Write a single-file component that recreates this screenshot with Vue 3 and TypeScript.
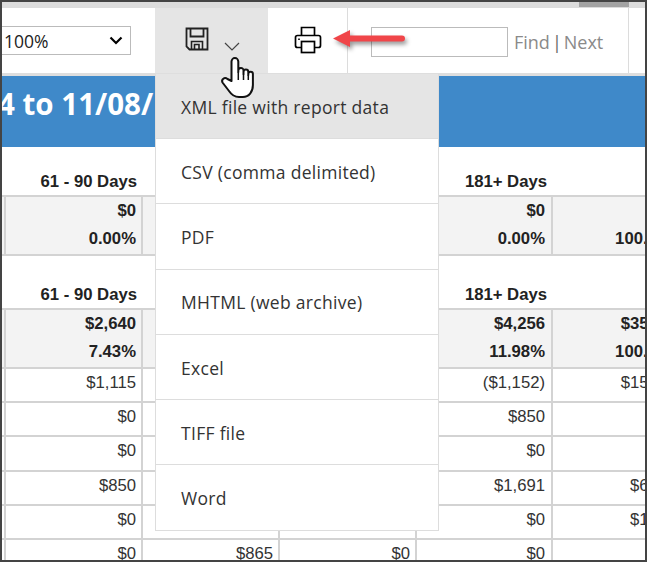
<script setup lang="ts">
interface ReportRow {
  cells: string[]
}

const menuItems: string[] = [
  'XML file with report data',
  'CSV (comma delimited)',
  'PDF',
  'MHTML (web archive)',
  'Excel',
  'TIFF file',
  'Word'
]

const headers: string[] = ['61 - 90 Days', '', '', '181+ Days', '']

const summaryOne: string[][] = [
  ['$0', '0.00%'],
  ['', ''],
  ['', ''],
  ['$0', '0.00%'],
  ['', '100.00%']
]

const summaryTwo: string[][] = [
  ['$2,640', '7.43%'],
  ['', ''],
  ['', ''],
  ['$4,256', '11.98%'],
  ['$35,526', '100.00%']
]

const rows: ReportRow[] = [
  { cells: ['$1,115', '', '', '($1,152)', '$15,204'] },
  { cells: ['$0', '', '', '$850', ''] },
  { cells: ['$0', '', '', '$0', ''] },
  { cells: ['$850', '', '', '$1,691', '$6,410'] },
  { cells: ['$0', '', '', '$0', '$1,250'] },
  { cells: ['$0', '$865', '$0', '$0', ''] }
]
</script>

<template>
  <div class="frame">
    <div class="strip"><span class="strip-tab"></span></div>

    <div class="toolbar">
      <div class="zoom-select">
        <span>100%</span>
        <svg width="14" height="9" viewBox="0 0 14 9" aria-hidden="true">
          <path d="M1.500 1.500 7 7l5.500-5.500" fill="none" stroke="#000" stroke-width="2.200" />
        </svg>
      </div>

      <div class="save-btn">
        <svg class="save-icon" width="24" height="24" viewBox="0 0 24 24" aria-hidden="true">
          <path d="M1.500 1.500H22.500V22.500H4.500L1.500 19.500Z" fill="none" stroke="#222" stroke-width="1.800" />
          <path d="M5.500 1.500V9.500H18.500V1.500" fill="none" stroke="#222" stroke-width="1.800" />
          <path d="M6.500 22.500V14.500H17.500V22.500M9.500 22.500V17.500H14V22.500" fill="none" stroke="#222" stroke-width="1.600" />
        </svg>
        <svg class="chevron" width="16" height="9" viewBox="0 0 16 9" aria-hidden="true">
          <path d="M1 1l7 7 7-7" fill="none" stroke="#444" stroke-width="1.200" />
        </svg>
      </div>

      <div class="print-btn">
        <svg width="28" height="28" viewBox="0 0 28 28" aria-hidden="true">
          <path d="M7.500 9.500V1.500H20.500V9.500" fill="none" stroke="#000" stroke-width="1.700" />
          <rect x="1.500" y="9.500" width="25" height="12" rx="2" fill="none" stroke="#000" stroke-width="1.700" />
          <rect x="7.500" y="15.500" width="13" height="11" fill="#fff" stroke="#000" stroke-width="1.700" />
          <rect x="4" y="12.500" width="2" height="1.500" fill="#333" />
        </svg>
      </div>

      <div class="find-area">
        <div class="find-input"></div>
        <span class="find-link">Find</span>
        <span class="find-sep">|</span>
        <span class="find-link">Next</span>
      </div>
    </div>

    <div class="banner"><span class="banner-text">4 to 11/08/</span></div>

    <div class="report">
      <div class="head-row first">
        <div v-for="(h, i) in headers" :key="i" class="head-cell">{{ h }}</div>
      </div>
      <div class="summary-row ruled">
        <div v-for="(c, i) in summaryOne" :key="i" class="cell summary-cell">
          <div class="line">{{ c[0] }}</div>
          <div class="line">{{ c[1] }}</div>
        </div>
      </div>

      <div class="head-row second">
        <div v-for="(h, i) in headers" :key="i" class="head-cell">{{ h }}</div>
      </div>
      <div class="summary-row">
        <div v-for="(c, i) in summaryTwo" :key="i" class="cell summary-cell">
          <div class="line">{{ c[0] }}</div>
          <div class="line">{{ c[1] }}</div>
        </div>
      </div>

      <div v-for="(r, ri) in rows" :key="ri" class="data-row">
        <div v-for="(c, ci) in r.cells" :key="ci" class="cell">{{ c }}</div>
      </div>
    </div>

    <ul class="menu">
      <li v-for="(item, i) in menuItems" :key="item" class="menu-item" :class="{ active: i === 0 }">{{ item }}</li>
    </ul>

    <svg class="arrow" width="78" height="26" viewBox="0 0 78 26" aria-hidden="true">
      <path d="M1 9.500 18 1V6.500H70a3 3 0 0 1 0 6H18V18Z" fill="#f04549" />
    </svg>

    <svg class="hand" width="36" height="42" viewBox="0 0 36 42" aria-hidden="true">
      <path
        d="M11.500 24V4.500a3.400 3.400 0 0 1 6.800 0V15V13.500a2.600 2.600 0 0 1 5.200 0V17V15a2.400 2.400 0 0 1 4.800 0V18V17a2.300 2.300 0 0 1 4.600 0V28c0 7-4 12-10 12H19c-5 0-8-3-10-6L2.500 25.500c-1.500-3 2-6 5-3.500Z"
        fill="#fff"
        stroke="#111"
        stroke-width="2"
        stroke-linejoin="round"
      />
      <path d="M18.300 15V23M23.500 17V23M28.300 18V23" fill="none" stroke="#111" stroke-width="1.500" />
    </svg>
  </div>
</template>

<style scoped>
.frame {
  position: relative;
  box-sizing: border-box;
  width: 647px;
  height: 562px;
  overflow: hidden;
  border: 2px solid #444;
  background: #fff;
  display: flex;
  flex-direction: column;
  font-family: "Liberation Sans", Arial, sans-serif;
}

.strip {
  position: relative;
  flex: none;
  height: 6px;
  background: #dcdcdc;
}

.strip-tab {
  position: absolute;
  top: 0;
  left: 577px;
  width: 50px;
  height: 5px;
  background: #a3a3a3;
}

.toolbar {
  flex: none;
  display: flex;
  align-items: stretch;
  height: 65px;
  border-bottom: 3px solid #dedede;
  font-family: "Open Sans", sans-serif;
}

.zoom-select {
  flex: none;
  align-self: flex-start;
  box-sizing: border-box;
  width: 129px;
  height: 29px;
  margin: 18px 24px 0 0;
  padding: 0 7px 0 2px;
  border: 1px solid #bbb;
  border-left: 0;
  display: flex;
  align-items: center;
  justify-content: space-between;
  font-size: 17.500px;
  color: #222;
}

.save-btn {
  position: relative;
  flex: none;
  width: 113px;
  background: #e5e5e5;
}

.save-icon {
  position: absolute;
  left: 30px;
  top: 19px;
}

.chevron {
  position: absolute;
  left: 69px;
  top: 34px;
}

.print-btn {
  flex: none;
  box-sizing: border-box;
  width: 80px;
  padding: 18px 0 0 26px;
  border-right: 1px solid #dcdcdc;
}

.find-area {
  flex: none;
  box-sizing: border-box;
  width: 281px;
  padding-left: 23px;
  padding-top: 2px;
  border-right: 1px solid #dcdcdc;
  display: flex;
  align-items: center;
  gap: 2px;
  font-size: 18px;
  color: #8a8a8a;
}

.find-input {
  box-sizing: border-box;
  width: 137px;
  height: 30px;
  margin-right: 4px;
  border: 1px solid #bbb;
}

.find-sep {
  color: #666;
}

.banner {
  flex: none;
  height: 71px;
  background: #3f89c9;
  overflow: hidden;
  color: #fff;
  font-family: "Open Sans", sans-serif;
  font-weight: 700;
  font-size: 29.500px;
  line-height: 56px;
  white-space: nowrap;
}

.banner-text {
  display: block;
  margin-left: -4px;
}

.report {
  flex: none;
  color: #333;
  font-size: 16.700px;
}

.head-row,
.summary-row,
.data-row {
  display: grid;
  grid-template-columns: 137px 137px 137px 136px 135px;
  padding-left: 2px;
}

.head-row {
  align-items: end;
  font-weight: 700;
  color: #222;
  border-bottom: 2px solid #d3d3d3;
}

.head-row.first {
  height: 48px;
}

.head-row.second {
  height: 52px;
}

.head-cell {
  text-align: right;
  padding: 0 4px 3px 0;
  line-height: 20px;
}

.cell {
  box-sizing: border-box;
  border-left: 2px solid #d3d3d3;
  padding-right: 5px;
  text-align: right;
  line-height: 27px;
}

.cell:nth-child(4) {
  padding-right: 6px;
}

.line {
  height: 28px;
  line-height: 28px;
}

.summary-row {
  height: 57px;
  background: #f3f3f3;
  font-weight: 700;
  color: #222;
}

.summary-row.ruled {
  border-bottom: 2px solid #d3d3d3;
}

.data-row {
  box-sizing: border-box;
  height: 34.200px;
  border-top: 2px solid #d3d3d3;
}

.menu {
  position: absolute;
  left: 153px;
  top: 72px;
  box-sizing: border-box;
  width: 284px;
  margin: 0;
  padding: 0;
  list-style: none;
  background: #fff;
  border: 1px solid #ddd;
  border-top: 0;
  font-family: "Open Sans", sans-serif;
  font-size: 17.500px;
  letter-spacing: 0.3px;
  color: #333;
}

.menu-item {
  box-sizing: border-box;
  height: 65.300px;
  padding: 1px 0 0 25px;
  display: flex;
  align-items: center;
  border-top: 1px solid #ddd;
}

.menu-item.active {
  height: 64px;
  background: #e5e5e5;
  border-top: 0;
}

.arrow {
  position: absolute;
  left: 330px;
  top: 27px;
  filter: drop-shadow(2px 3px 2px rgba(0, 0, 0, 0.4));
}

.hand {
  position: absolute;
  left: 218px;
  top: 55px;
}
</style>
